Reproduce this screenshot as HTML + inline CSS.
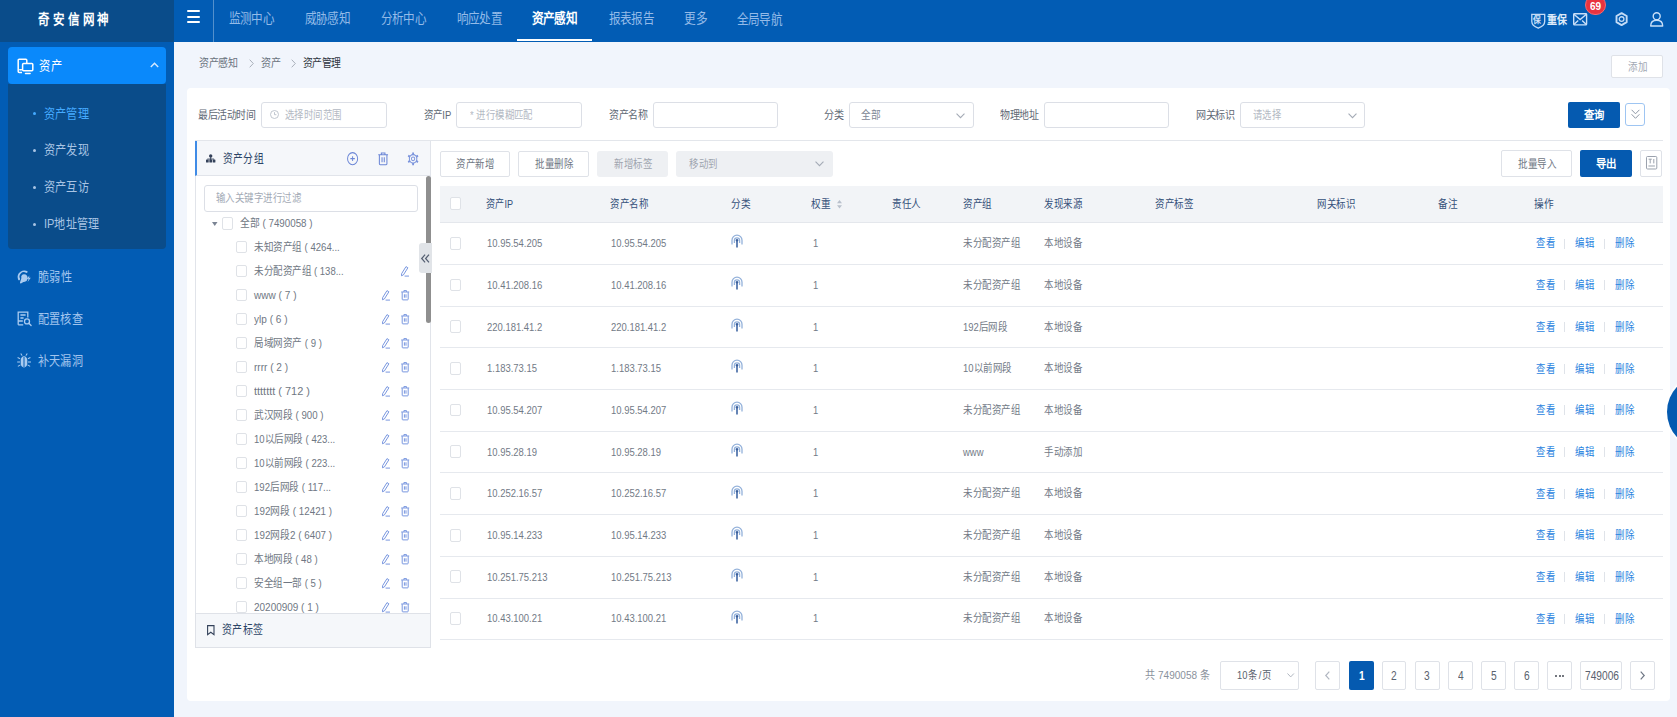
<!DOCTYPE html>
<html lang="zh-CN"><head><meta charset="utf-8"><title>资产管理</title>
<style>
*{box-sizing:border-box;margin:0;padding:0}
html,body{width:1677px;height:717px;overflow:hidden}
body{position:relative;background:#f1f5fc;font-family:"Liberation Sans",sans-serif;font-size:11px;color:#5d6673}
.b{position:absolute}
.t{position:absolute;white-space:nowrap;height:20px;line-height:20px;transform-origin:0 50%;transform:scaleX(.87)}
svg{position:absolute;overflow:visible}
/* text classes */
.nav{font-size:13.5px;color:#94bbe8;transform:scaleX(.83)}
.nav.on{color:#fff;font-weight:bold}
.logo{font-size:14px;font-weight:bold;color:#fff;letter-spacing:4px;transform:scaleX(.82)}
.m1{font-size:13px;color:#a2c5ee;transform:scaleX(.86)}
.m1.on{color:#fff}
.m2{font-size:13px;color:#a9c4e4;transform:scaleX(.86)}
.m2.on{color:#45aaff}
.bc{font-size:11.5px;color:#6b7480;transform:scaleX(.85)}
.bc.on{color:#2f3640}
.lb{font-size:11.5px;color:#616975;transform:scaleX(.85)}
.ph{font-size:11px;color:#b3b9c3;transform:scaleX(.87)}
.val{font-size:11px;color:#7d8694}
.btn{font-size:11px;color:#6e7683}
.btnw{font-size:11.5px;color:#fff;font-weight:bold;transform:scaleX(.85)}
.dis{font-size:11px;color:#9ea5af}
.ph2{font-size:11px;color:#a3aab5}
.pt{font-size:12.5px;color:#2c4466;transform:scaleX(.84)}
.tr{font-size:11px;color:#6f7783;transform:scaleX(.88)}
.th{font-size:11px;color:#34507a;transform:scaleX(.88)}
.td{font-size:11px;color:#727a86;transform:scaleX(.86)}
.lk{font-size:11px;color:#2a84e0;transform:scaleX(.87)}
.pg{font-size:11px;color:#5a626e;transform:scaleX(.85)}
.pgt{font-size:11px;color:#8a919c;transform:scaleX(.86)}
/* boxes */
.inp{border:1px solid #dcdfe6;border-radius:3px;background:#fff}
.wbtn{border:1px solid #dfe2e8;border-radius:2px;background:#fff}
.pbtn{background:#055ab0;border-radius:2px}
.gbtn{background:#eef0f3;border-radius:3px}
.cb{border:1px solid #dfe2e7;border-radius:2px;background:#fff}
.hl{background:#e6e9ee;height:1px}
.pb{border:1px solid #dfe2e8;border-radius:2px;background:#fff}
</style></head><body>

<div class="b" id="side" style="left:0;top:0;width:174px;height:717px;background:#025cb4"></div>
<div class="b" id="logo" style="left:0;top:0;width:174px;height:41.5px;background:#0a4c8a"></div>
<span class="t logo" style="left:38.2px;top:9.2px;transform:scaleX(0.821);width:90.30px;text-align-last:justify;">奇安信网神</span>
<div class="b " style="left:8px;top:47px;width:158.0px;height:37.0px;background:#0a89fb;border-radius:4px"></div>
<div class="b " style="left:8px;top:84px;width:158.0px;height:164.5px;background:#0a4c8a;border-radius:0 0 4px 4px"></div>
<svg style="left:16.5px;top:58px" width="17" height="17" viewBox="0 0 17 17" fill="none" stroke="#fff" stroke-width="1.5" stroke-linejoin="round"><path d="M5 14.5H2.2a1 1 0 0 1-1-1V2.2a1 1 0 0 1 1-1h6.6a1 1 0 0 1 1 1V5"/><rect x="5.6" y="5.6" width="10.2" height="7.2" rx="1" fill="#0a89fb"/><path d="M8.5 15.6h4.6M2.8 11.8h1.6" stroke-linecap="round"/></svg>
<span class="t m1 on" style="left:38.5px;top:56.0px;transform:scaleX(0.865);width:26.30px;text-align-last:justify;">资产</span>
<svg style="left:150px;top:62px" width="9" height="6" viewBox="0 0 9 6" fill="none" stroke="#d6e9ff" stroke-width="1.4"><path d="M0.8 5L4.5 1.3 8.2 5"/></svg>
<div class="b " style="left:32.8px;top:112.1px;width:3.0px;height:3.0px;background:#45aaff;border-radius:50%"></div>
<span class="t m2 on" style="left:43.8px;top:103.5px;transform:scaleX(0.858);width:52.30px;text-align-last:justify;">资产管理</span>
<div class="b " style="left:32.8px;top:148.9px;width:3.0px;height:3.0px;background:#a9c4e4;border-radius:50%"></div>
<span class="t m2" style="left:43.8px;top:140.3px;transform:scaleX(0.858);width:52.30px;text-align-last:justify;">资产发现</span>
<div class="b " style="left:32.8px;top:185.6px;width:3.0px;height:3.0px;background:#a9c4e4;border-radius:50%"></div>
<span class="t m2" style="left:43.8px;top:177.0px;transform:scaleX(0.858);width:52.30px;text-align-last:justify;">资产互访</span>
<div class="b " style="left:32.8px;top:222.6px;width:3.0px;height:3.0px;background:#a9c4e4;border-radius:50%"></div>
<span class="t m2" style="left:43.8px;top:214.0px;transform:scaleX(0.848);width:64.60px;text-align-last:justify;">IP地址管理</span>
<svg style="left:17px;top:269.600px" width="14" height="14" viewBox="0 0 14 14" fill="#aacbf0"><path d="M7 .6a6.4 6.4 0 0 0-5.8 9.1c.3.6 1 .7 1.500.3.500-.4.500-1 .3-1.500A4.300 4.300 0 0 1 9 2.800c.6.2 1.200 0 1.500-.500.300-.6 0-1.200-.5-1.400A6.300 6.300 0 0 0 7 .6zM7 4.200a2.800 2.800 0 0 0-2.600 3.900L3 12.600c-.2.600.4 1.100.9.800l2.500-1.500a2.800 2.800 0 1 0 .6-7.700zm5.300 1.200-2.200 3.300h1.500l-1 3.300 3.200-4.200h-1.700z"/></svg>
<span class="t m1" style="left:37.5px;top:266.6px;transform:scaleX(0.859);width:39.30px;text-align-last:justify;">脆弱性</span>
<svg style="left:17px;top:311px" width="15" height="15" viewBox="0 0 15 15" fill="none" stroke="#aacbf0" stroke-width="1.3"><path d="M1.200 13.800V1.200h9.600v5.300M3.400 4h5.200M3.400 7h3.200M1.200 10h4.600M1.200 13.800h5"/><circle cx="10" cy="10.400" r="2.500"/><path d="M11.900 12.300l2.200 2.200" stroke-linecap="round"/></svg>
<span class="t m1" style="left:37.5px;top:308.7px;transform:scaleX(0.856);width:52.30px;text-align-last:justify;">配置核查</span>
<svg style="left:17px;top:353px" width="14" height="15" viewBox="0 0 14 15" fill="#aacbf0"><path d="M7 3.200c-1.900 0-3.300 1.700-3.300 4v3.300c0 2.200 1.400 3.900 3.300 3.900s3.300-1.700 3.300-3.900V7.200c0-2.300-1.400-4-3.300-4zM4.600 2.800 3.300.8 4.200.3l1.400 2.100zM9.400 2.800 10.700.8 9.800.3 8.400 2.400zM3 6.200.4 5l.4-.9L3.300 5.300zM11 6.200 13.600 5l-.4-.9-2.500 1.200zM3 8.600H.2v1h2.800zM14 8.600h-3v1h3zM3.200 11.400.6 13l.5.800 2.500-1.500zM10.800 11.400l2.600 1.600-.5.800-2.500-1.500z"/><path d="M6.500 4h1v10h-1z" fill="#025cb4"/></svg>
<span class="t m1" style="left:37.5px;top:350.5px;transform:scaleX(0.856);width:52.30px;text-align-last:justify;">补天漏洞</span>
<div class="b" id="top" style="left:174px;top:0;width:1503px;height:41.5px;background:#025cb4"></div>
<div class="b " style="left:187px;top:10.4px;width:12.5px;height:2.0px;background:#fff;border-radius:1px"></div>
<div class="b " style="left:187px;top:15.9px;width:12.5px;height:2.0px;background:#fff;border-radius:1px"></div>
<div class="b " style="left:187px;top:21.4px;width:12.5px;height:2.0px;background:#fff;border-radius:1px"></div>
<div class="b " style="left:212.5px;top:0px;width:1.0px;height:41.5px;background:rgba(255,255,255,.32)"></div>
<span class="t nav" style="left:229.2px;top:8.6px;transform:scaleX(0.858);width:52.30px;text-align-last:justify;">监测中心</span>
<span class="t nav" style="left:305px;top:8.6px;transform:scaleX(0.858);width:52.30px;text-align-last:justify;">威胁感知</span>
<span class="t nav" style="left:381px;top:8.6px;transform:scaleX(0.858);width:52.30px;text-align-last:justify;">分析中心</span>
<span class="t nav" style="left:456.7px;top:8.6px;transform:scaleX(0.858);width:52.30px;text-align-last:justify;">响应处置</span>
<span class="t nav on" style="left:532.3px;top:8.6px;transform:scaleX(0.858);width:52.30px;text-align-last:justify;">资产感知</span>
<span class="t nav" style="left:608.5px;top:8.6px;transform:scaleX(0.858);width:52.30px;text-align-last:justify;">报表报告</span>
<span class="t nav" style="left:683.7px;top:8.6px;transform:scaleX(0.865);width:26.30px;text-align-last:justify;">更多</span>
<span class="t nav" style="left:737.3px;top:9.5px;transform:scaleX(0.858);width:52.30px;text-align-last:justify;">全局导航</span>
<div class="b " style="left:516.6px;top:39.3px;width:75.4px;height:2.2px;background:#fff"></div>
<svg style="left:1530.500px;top:13px" width="14.500" height="16" viewBox="0 0 14.500 16" fill="none" stroke="#c3dbf6" stroke-width="1.300"><path d="M.8 1.300h12.900v7.200c0 3.200-2.800 5.300-6.450 6.700C3.600 13.800.8 11.700.8 8.500z"/></svg>
<span class="t " style="left:1533.3px;top:10.3px;font-size:9px;font-weight:bold;color:#cfe2f8;transform:scaleX(.92)width:9.30px;text-align-last:justify;">保</span>
<span class="t " style="left:1547.2px;top:10.4px;font-size:11.5px;color:#deebfa;font-weight:bold;transform:scaleX(0.868);width:22.30px;text-align-last:justify;">重保</span>
<svg style="left:1572.700px;top:13.400px" width="14.300" height="12.600" viewBox="0 0 14.300 12.600" fill="none" stroke="#c9dff8" stroke-width="1.400"><rect x=".7" y=".7" width="12.900" height="11.200" rx=".8"/><path d="M.9 1.200l6.250 5.300 6.250-5.300M.9 11.600l4.300-4.200M13.400 11.600 9.100 7.400"/></svg>
<div class="b " style="left:1585.3px;top:-5px;width:20.9px;height:19.7px;background:#e9333f;border-radius:10px;border:1px solid #f46a72"></div>
<span class="t " style="left:1589.9px;top:-4.3px;font-size:10.5px;font-weight:bold;color:#fff;transform:scaleX(0.958);">69</span>
<svg style="left:1615px;top:11.600px" width="13.200" height="14.200" viewBox="0 0 14 15.200" preserveAspectRatio="none" fill="none" stroke="#c3dbf6" stroke-width="1.500"><path d="M7 1.200l5.400 3.100v6.600L7 14 1.600 10.900V4.300z" stroke-linejoin="round" stroke-width="2"/><circle cx="7" cy="7.600" r="2.500" stroke-width="1.400"/></svg>
<svg style="left:1650.300px;top:11.700px" width="13.400" height="14.700" viewBox="0 0 13.400 14.700" fill="none" stroke="#c9dff8" stroke-width="1.400"><circle cx="6.700" cy="4.300" r="3.500"/><path d="M.7 14c0-3.600 2.400-5.800 6-5.800s6 2.200 6 5.800z" stroke-linejoin="round"/></svg>
<span class="t bc" style="left:199.1px;top:53.3px;transform:scaleX(0.868);width:44.30px;text-align-last:justify;">资产感知</span>
<svg style="left:248.500px;top:59px" width="5" height="9" viewBox="0 0 5 9" fill="none" stroke="#a9b0ba" stroke-width="1"><path d="M.7.700 4.300 4.500.7 8.300"/></svg>
<span class="t bc" style="left:260.5px;top:53.3px;transform:scaleX(0.877);width:22.30px;text-align-last:justify;">资产</span>
<svg style="left:290.500px;top:59px" width="5" height="9" viewBox="0 0 5 9" fill="none" stroke="#a9b0ba" stroke-width="1"><path d="M.7.700 4.300 4.500.7 8.300"/></svg>
<span class="t bc on" style="left:302.9px;top:53.3px;transform:scaleX(0.855);width:44.30px;text-align-last:justify;">资产管理</span>
<div class="b wbtn" style="left:1611.2px;top:55.2px;width:51.6px;height:22.6px;"></div>
<span class="t " style="left:1627.6px;top:56.9px;font-size:11px;color:#a1a8b3;transform:scaleX(0.868);width:22.30px;text-align-last:justify;">添加</span>
<div class="b " style="left:187px;top:88px;width:1482.5px;height:613.0px;background:#fff;border-radius:4px"></div>
<span class="t lb" style="left:198.4px;top:104.8px;transform:scaleX(0.862);width:66.30px;text-align-last:justify;">最后活动时间</span>
<div class="b inp" style="left:261px;top:102.2px;width:125.7px;height:25.6px;"></div>
<svg style="left:270.400px;top:110.300px" width="9" height="9" viewBox="0 0 9 9" fill="none" stroke="#b9bfc9" stroke-width=".9"><circle cx="4.500" cy="4.500" r="4"/><path d="M4.500 2.200v2.500h1.900"/></svg>
<span class="t ph" style="left:285.4px;top:104.8px;transform:scaleX(0.858);width:66.30px;text-align-last:justify;">选择时间范围</span>
<span class="t lb" style="left:423.5px;top:104.8px;transform:scaleX(0.824);width:33.17px;text-align-last:justify;">资产IP</span>
<div class="b inp" style="left:456.4px;top:102.2px;width:125.9px;height:25.6px;"></div>
<span class="t ph" style="left:469.8px;top:104.8px;transform:scaleX(0.854);width:73.64px;text-align-last:justify;">* 进行模糊匹配</span>
<span class="t lb" style="left:609px;top:104.8px;transform:scaleX(0.864);width:44.30px;text-align-last:justify;">资产名称</span>
<div class="b inp" style="left:652.6px;top:102.2px;width:125.6px;height:25.6px;"></div>
<span class="t lb" style="left:823.8px;top:104.8px;transform:scaleX(0.877);width:22.30px;text-align-last:justify;">分类</span>
<div class="b inp" style="left:848.5px;top:102.2px;width:125.1px;height:25.6px;"></div>
<span class="t val" style="left:860.7px;top:104.8px;transform:scaleX(0.877);width:22.30px;text-align-last:justify;">全部</span>
<svg style="left:956.400px;top:112.500px" width="9" height="5.600" viewBox="0 0 8.400 5" fill="none" stroke="#a4aab5" stroke-width="1"><path d="M.5.500 4.200 4.200 7.900.5"/></svg>
<span class="t lb" style="left:1000.2px;top:104.8px;transform:scaleX(0.866);width:44.30px;text-align-last:justify;">物理地址</span>
<div class="b inp" style="left:1043.7px;top:102.2px;width:125.8px;height:25.6px;"></div>
<span class="t lb" style="left:1196px;top:104.8px;transform:scaleX(0.875);width:44.30px;text-align-last:justify;">网关标识</span>
<div class="b inp" style="left:1240px;top:102.2px;width:125.3px;height:25.6px;"></div>
<span class="t ph" style="left:1252.6px;top:104.8px;transform:scaleX(0.848);width:33.30px;text-align-last:justify;">请选择</span>
<svg style="left:1347.700px;top:112.500px" width="9" height="5.600" viewBox="0 0 8.400 5" fill="none" stroke="#a4aab5" stroke-width="1"><path d="M.5.500 4.200 4.200 7.900.5"/></svg>
<div class="b pbtn" style="left:1567.5px;top:102.3px;width:52.8px;height:25.6px;"></div>
<span class="t btnw" style="left:1584.3px;top:105.0px;transform:scaleX(0.895);width:22.30px;text-align-last:justify;">查询</span>
<div class="b " style="left:1625.2px;top:102.8px;width:19.6px;height:23.0px;border:1px solid #9ec5f2;border-radius:3px;background:#fff"></div>
<svg style="left:1630.500px;top:108.800px" width="9" height="10.500" viewBox="0 0 9 10.500" fill="none" stroke="#8f98a6" stroke-width="1"><path d="M.6.800 4.500 4.800 8.400.8M.6 5.300 4.500 9.300 8.400 5.300"/></svg>
<div class="b hl" style="left:195.4px;top:139.8px;width:1467.2px;height:1.0px;background:#e3e6eb"></div>
<div class="b " style="left:195.4px;top:140.8px;width:236.1px;height:506.7px;border:1px solid #e1e4ea;border-top:0;background:#fff"></div>
<div class="b " style="left:195.4px;top:140.8px;width:236.1px;height:35.0px;background:#f5f7fa;border-bottom:1px solid #e1e4ea;border-right:1px solid #e1e4ea;border-left:2px solid #3f8be6"></div>
<svg style="left:205.800px;top:154.400px" width="9.400" height="9" viewBox="0 0 9.400 9" fill="#34425a"><circle cx="4.700" cy="1.900" r="1.700"/><rect x="4.200" y="3" width="1" height="3"/><rect x="1.300" y="4.600" width="6.800" height=".9"/><rect x="0" y="5.400" width="2.700" height="3.200" rx=".6"/><rect x="3.350" y="5.400" width="2.700" height="3.200" rx=".6"/><rect x="6.700" y="5.400" width="2.700" height="3.200" rx=".6"/></svg>
<span class="t pt" style="left:222.7px;top:149.0px;transform:scaleX(0.779);width:52.30px;text-align-last:justify;">资产分组</span>
<svg style="left:347.100px;top:151.600px" width="11.200" height="13.400" viewBox="0 0 14 14" preserveAspectRatio="none" fill="none" stroke="#6b86d6" stroke-width="1.200"><circle cx="7" cy="7" r="6.300"/><path d="M7 4.500v5M4.200 7h5.600"/></svg>
<svg style="left:377.800px;top:151.600px" width="10.300" height="13.400" viewBox="0 0 12 14" preserveAspectRatio="none" fill="none" stroke="#6b86d6" stroke-width="1.200"><path d="M.3 2.900h11.400M3.900 2.700V1h4.200v1.700M1.600 3.100v9.300c0 .6.400.9.900.9h7c.5 0 .9-.3.900-.9V3.100M4.700 5.600v5M7.300 5.600v5"/></svg>
<svg style="left:406.900px;top:151.600px" width="12.200" height="13.700" viewBox="0 0 14 14" preserveAspectRatio="none" fill="none" stroke="#7b94dc"><circle cx="7" cy="7" r="4.300" stroke-width="1.200"/><circle cx="7" cy="7" r="1.900" stroke-width="1.100"/><path d="M7 .5v2.200M7 11.300v2.200M1.370 3.750l1.900 1.100M10.730 9.150l1.900 1.100M1.370 10.250l1.900-1.100M10.730 4.850l1.900-1.100" stroke-width="2.100"/></svg>
<div class="b inp" style="left:203.5px;top:185.2px;width:214.2px;height:26.4px;"></div>
<span class="t ph2" style="left:216px;top:188.3px;transform:scaleX(0.857);width:99.30px;text-align-last:justify;">输入关键字进行过滤</span>
<div class="b " style="left:425.6px;top:176px;width:5.3px;height:147.0px;background:#8f8f8f;border-radius:2.500px"></div>
<div class="b " style="left:418.8px;top:243.4px;width:12.8px;height:30.1px;background:#e1e4e8;border-radius:3px 0 0 3px"></div>
<svg style="left:420.600px;top:253.500px" width="8.600" height="9" viewBox="0 0 8.600 9" fill="none" stroke="#566073" stroke-width="1.250"><path d="M4.100.600.7 4.500 4.100 8.400M8 .600 4.600 4.500 8 8.400"/></svg>
<svg style="left:211.500px;top:221.500px" width="5.500" height="4" viewBox="0 0 5.500 4" fill="#7b8494"><path d="M0 0h5.500L2.750 4z"/></svg>
<div class="b cb" style="left:222px;top:217px;width:11.1px;height:12.6px;"></div>
<span class="t tr" style="left:239.7px;top:213.4px;transform:scaleX(0.889);width:81.63px;text-align-last:justify;">全部 ( 7490058 )</span>
<div class="b cb" style="left:236.1px;top:240.7px;width:11.2px;height:12.8px;"></div>
<span class="t tr" style="left:253.7px;top:237.2px;transform:scaleX(0.868);width:98.72px;text-align-last:justify;">未知资产组 ( 4264...</span>
<div class="b cb" style="left:236.1px;top:264.7px;width:11.2px;height:12.8px;"></div>
<span class="t tr" style="left:253.7px;top:261.2px;transform:scaleX(0.865);width:103.60px;text-align-last:justify;">未分配资产组 ( 138...</span>
<svg style="left:401.4px;top:266.0px" width="8.200" height="10.600" viewBox="0 0 8.200 10.600" fill="none" stroke="#7191dd" stroke-width=".95"><path d="M5 .600 6.900 1.800 2.400 8.900.5 9.800l.1-2.100zM3.600 10.100H8"/></svg>
<div class="b cb" style="left:236.1px;top:288.7px;width:11.2px;height:12.8px;"></div>
<span class="t tr" style="left:253.7px;top:285.2px;transform:scaleX(0.915);">www ( 7 )</span>
<svg style="left:382.2px;top:289.8px" width="8.200" height="10.600" viewBox="0 0 8.200 10.600" fill="none" stroke="#7191dd" stroke-width=".95"><path d="M5 .600 6.900 1.800 2.400 8.900.5 9.800l.1-2.100zM3.600 10.100H8"/></svg>
<svg style="left:401.4px;top:289.6px" width="8.400" height="10.400" viewBox="0 0 8.400 10.400" fill="none" stroke="#7191dd" stroke-width=".95"><path d="M.2 2h8M2.900 1.800V.6h2.600v1.200M1.200 2.200v7c0 .4.300.7.700.7h4.600c.4 0 .7-.3.700-.7v-7M3.400 4.300v3.400M5 4.300v3.400"/></svg>
<div class="b cb" style="left:236.1px;top:312.7px;width:11.2px;height:12.8px;"></div>
<span class="t tr" style="left:253.7px;top:309.2px;transform:scaleX(0.913);">ylp ( 6 )</span>
<svg style="left:382.2px;top:313.8px" width="8.200" height="10.600" viewBox="0 0 8.200 10.600" fill="none" stroke="#7191dd" stroke-width=".95"><path d="M5 .600 6.900 1.800 2.400 8.900.5 9.800l.1-2.100zM3.600 10.100H8"/></svg>
<svg style="left:401.4px;top:313.6px" width="8.400" height="10.400" viewBox="0 0 8.400 10.400" fill="none" stroke="#7191dd" stroke-width=".95"><path d="M.2 2h8M2.900 1.800V.6h2.600v1.200M1.200 2.200v7c0 .4.300.7.700.7h4.600c.4 0 .7-.3.700-.7v-7M3.400 4.300v3.400M5 4.300v3.400"/></svg>
<div class="b cb" style="left:236.1px;top:336.7px;width:11.2px;height:12.8px;"></div>
<span class="t tr" style="left:253.7px;top:333.2px;transform:scaleX(0.871);width:77.92px;text-align-last:justify;">局域网资产 ( 9 )</span>
<svg style="left:382.2px;top:337.8px" width="8.200" height="10.600" viewBox="0 0 8.200 10.600" fill="none" stroke="#7191dd" stroke-width=".95"><path d="M5 .600 6.900 1.800 2.400 8.900.5 9.800l.1-2.100zM3.600 10.100H8"/></svg>
<svg style="left:401.4px;top:337.6px" width="8.400" height="10.400" viewBox="0 0 8.400 10.400" fill="none" stroke="#7191dd" stroke-width=".95"><path d="M.2 2h8M2.900 1.800V.6h2.600v1.200M1.200 2.200v7c0 .4.300.7.700.7h4.600c.4 0 .7-.3.700-.7v-7M3.400 4.300v3.400M5 4.300v3.400"/></svg>
<div class="b cb" style="left:236.1px;top:360.7px;width:11.2px;height:12.8px;"></div>
<span class="t tr" style="left:253.7px;top:357.2px;transform:scaleX(0.915);">rrrr ( 2 )</span>
<svg style="left:382.2px;top:361.8px" width="8.200" height="10.600" viewBox="0 0 8.200 10.600" fill="none" stroke="#7191dd" stroke-width=".95"><path d="M5 .600 6.900 1.800 2.400 8.900.5 9.800l.1-2.100zM3.600 10.100H8"/></svg>
<svg style="left:401.4px;top:361.6px" width="8.400" height="10.400" viewBox="0 0 8.400 10.400" fill="none" stroke="#7191dd" stroke-width=".95"><path d="M.2 2h8M2.900 1.800V.6h2.600v1.200M1.200 2.200v7c0 .4.300.7.700.7h4.600c.4 0 .7-.3.700-.7v-7M3.400 4.300v3.400M5 4.300v3.400"/></svg>
<div class="b cb" style="left:236.1px;top:384.7px;width:11.2px;height:12.8px;"></div>
<span class="t tr" style="left:253.7px;top:381.2px;transform:scaleX(0.994);">ttttttt ( 712 )</span>
<svg style="left:382.2px;top:385.8px" width="8.200" height="10.600" viewBox="0 0 8.200 10.600" fill="none" stroke="#7191dd" stroke-width=".95"><path d="M5 .600 6.900 1.800 2.400 8.900.5 9.800l.1-2.100zM3.600 10.100H8"/></svg>
<svg style="left:401.4px;top:385.6px" width="8.400" height="10.400" viewBox="0 0 8.400 10.400" fill="none" stroke="#7191dd" stroke-width=".95"><path d="M.2 2h8M2.900 1.800V.6h2.600v1.200M1.200 2.200v7c0 .4.300.7.700.7h4.600c.4 0 .7-.3.700-.7v-7M3.400 4.300v3.400M5 4.300v3.400"/></svg>
<div class="b cb" style="left:236.1px;top:408.7px;width:11.2px;height:12.8px;"></div>
<span class="t tr" style="left:253.7px;top:405.2px;transform:scaleX(0.879);width:79.16px;text-align-last:justify;">武汉网段 ( 900 )</span>
<svg style="left:382.2px;top:409.8px" width="8.200" height="10.600" viewBox="0 0 8.200 10.600" fill="none" stroke="#7191dd" stroke-width=".95"><path d="M5 .600 6.900 1.800 2.400 8.900.5 9.800l.1-2.100zM3.600 10.100H8"/></svg>
<svg style="left:401.4px;top:409.6px" width="8.400" height="10.400" viewBox="0 0 8.400 10.400" fill="none" stroke="#7191dd" stroke-width=".95"><path d="M.2 2h8M2.900 1.800V.6h2.600v1.200M1.200 2.200v7c0 .4.300.7.700.7h4.600c.4 0 .7-.3.700-.7v-7M3.400 4.300v3.400M5 4.300v3.400"/></svg>
<div class="b cb" style="left:236.1px;top:432.7px;width:11.2px;height:12.8px;"></div>
<span class="t tr" style="left:253.7px;top:429.2px;transform:scaleX(0.866);width:93.85px;text-align-last:justify;">10以后网段 ( 423...</span>
<svg style="left:382.2px;top:433.8px" width="8.200" height="10.600" viewBox="0 0 8.200 10.600" fill="none" stroke="#7191dd" stroke-width=".95"><path d="M5 .600 6.900 1.800 2.400 8.900.5 9.800l.1-2.100zM3.600 10.100H8"/></svg>
<svg style="left:401.4px;top:433.6px" width="8.400" height="10.400" viewBox="0 0 8.400 10.400" fill="none" stroke="#7191dd" stroke-width=".95"><path d="M.2 2h8M2.900 1.800V.6h2.600v1.200M1.200 2.200v7c0 .4.300.7.700.7h4.600c.4 0 .7-.3.700-.7v-7M3.400 4.300v3.400M5 4.300v3.400"/></svg>
<div class="b cb" style="left:236.1px;top:456.7px;width:11.2px;height:12.8px;"></div>
<span class="t tr" style="left:253.7px;top:453.2px;transform:scaleX(0.866);width:93.85px;text-align-last:justify;">10以前网段 ( 223...</span>
<svg style="left:382.2px;top:457.8px" width="8.200" height="10.600" viewBox="0 0 8.200 10.600" fill="none" stroke="#7191dd" stroke-width=".95"><path d="M5 .600 6.900 1.800 2.400 8.900.5 9.800l.1-2.100zM3.600 10.100H8"/></svg>
<svg style="left:401.4px;top:457.6px" width="8.400" height="10.400" viewBox="0 0 8.400 10.400" fill="none" stroke="#7191dd" stroke-width=".95"><path d="M.2 2h8M2.900 1.800V.6h2.600v1.200M1.200 2.200v7c0 .4.300.7.700.7h4.600c.4 0 .7-.3.700-.7v-7M3.400 4.300v3.400M5 4.300v3.400"/></svg>
<div class="b cb" style="left:236.1px;top:480.7px;width:11.2px;height:12.8px;"></div>
<span class="t tr" style="left:253.7px;top:477.2px;transform:scaleX(0.874);width:88.14px;text-align-last:justify;">192后网段 ( 117...</span>
<svg style="left:382.2px;top:481.8px" width="8.200" height="10.600" viewBox="0 0 8.200 10.600" fill="none" stroke="#7191dd" stroke-width=".95"><path d="M5 .600 6.900 1.800 2.400 8.900.5 9.800l.1-2.100zM3.600 10.100H8"/></svg>
<svg style="left:401.4px;top:481.6px" width="8.400" height="10.400" viewBox="0 0 8.400 10.400" fill="none" stroke="#7191dd" stroke-width=".95"><path d="M.2 2h8M2.900 1.800V.6h2.600v1.200M1.200 2.200v7c0 .4.300.7.700.7h4.600c.4 0 .7-.3.700-.7v-7M3.400 4.300v3.400M5 4.300v3.400"/></svg>
<div class="b cb" style="left:236.1px;top:504.7px;width:11.2px;height:12.8px;"></div>
<span class="t tr" style="left:253.7px;top:501.2px;transform:scaleX(0.89);width:87.74px;text-align-last:justify;">192网段 ( 12421 )</span>
<svg style="left:382.2px;top:505.8px" width="8.200" height="10.600" viewBox="0 0 8.200 10.600" fill="none" stroke="#7191dd" stroke-width=".95"><path d="M5 .600 6.900 1.800 2.400 8.900.5 9.800l.1-2.100zM3.600 10.100H8"/></svg>
<svg style="left:401.4px;top:505.6px" width="8.400" height="10.400" viewBox="0 0 8.400 10.400" fill="none" stroke="#7191dd" stroke-width=".95"><path d="M.2 2h8M2.900 1.800V.6h2.600v1.200M1.200 2.200v7c0 .4.300.7.700.7h4.600c.4 0 .7-.3.700-.7v-7M3.400 4.300v3.400M5 4.300v3.400"/></svg>
<div class="b cb" style="left:236.1px;top:528.7px;width:11.2px;height:12.8px;"></div>
<span class="t tr" style="left:253.7px;top:525.2px;transform:scaleX(0.89);width:87.74px;text-align-last:justify;">192网段2 ( 6407 )</span>
<svg style="left:382.2px;top:529.8px" width="8.200" height="10.600" viewBox="0 0 8.200 10.600" fill="none" stroke="#7191dd" stroke-width=".95"><path d="M5 .600 6.900 1.800 2.400 8.900.5 9.800l.1-2.100zM3.600 10.100H8"/></svg>
<svg style="left:401.4px;top:529.6px" width="8.400" height="10.400" viewBox="0 0 8.400 10.400" fill="none" stroke="#7191dd" stroke-width=".95"><path d="M.2 2h8M2.900 1.800V.6h2.600v1.200M1.200 2.200v7c0 .4.300.7.700.7h4.600c.4 0 .7-.3.700-.7v-7M3.400 4.300v3.400M5 4.300v3.400"/></svg>
<div class="b cb" style="left:236.1px;top:552.7px;width:11.2px;height:12.8px;"></div>
<span class="t tr" style="left:253.7px;top:549.2px;transform:scaleX(0.872);width:73.03px;text-align-last:justify;">本地网段 ( 48 )</span>
<svg style="left:382.2px;top:553.8px" width="8.200" height="10.600" viewBox="0 0 8.200 10.600" fill="none" stroke="#7191dd" stroke-width=".95"><path d="M5 .600 6.900 1.800 2.400 8.900.5 9.800l.1-2.100zM3.600 10.100H8"/></svg>
<svg style="left:401.4px;top:553.6px" width="8.400" height="10.400" viewBox="0 0 8.400 10.400" fill="none" stroke="#7191dd" stroke-width=".95"><path d="M.2 2h8M2.900 1.800V.6h2.600v1.200M1.200 2.200v7c0 .4.300.7.700.7h4.600c.4 0 .7-.3.700-.7v-7M3.400 4.300v3.400M5 4.300v3.400"/></svg>
<div class="b cb" style="left:236.1px;top:576.7px;width:11.2px;height:12.8px;"></div>
<span class="t tr" style="left:253.7px;top:573.2px;transform:scaleX(0.87);width:77.92px;text-align-last:justify;">安全组一部 ( 5 )</span>
<svg style="left:382.2px;top:577.8px" width="8.200" height="10.600" viewBox="0 0 8.200 10.600" fill="none" stroke="#7191dd" stroke-width=".95"><path d="M5 .600 6.900 1.800 2.400 8.900.5 9.800l.1-2.100zM3.600 10.100H8"/></svg>
<svg style="left:401.4px;top:577.6px" width="8.400" height="10.400" viewBox="0 0 8.400 10.400" fill="none" stroke="#7191dd" stroke-width=".95"><path d="M.2 2h8M2.900 1.800V.6h2.600v1.200M1.200 2.200v7c0 .4.300.7.700.7h4.600c.4 0 .7-.3.700-.7v-7M3.400 4.300v3.400M5 4.300v3.400"/></svg>
<div class="b cb" style="left:236.1px;top:600.7px;width:11.2px;height:12.8px;"></div>
<span class="t tr" style="left:253.7px;top:597.2px;transform:scaleX(0.906);">20200909 ( 1 )</span>
<svg style="left:382.2px;top:601.8px" width="8.200" height="10.600" viewBox="0 0 8.200 10.600" fill="none" stroke="#7191dd" stroke-width=".95"><path d="M5 .600 6.900 1.800 2.400 8.900.5 9.800l.1-2.100zM3.600 10.100H8"/></svg>
<svg style="left:401.4px;top:601.6px" width="8.400" height="10.400" viewBox="0 0 8.400 10.400" fill="none" stroke="#7191dd" stroke-width=".95"><path d="M.2 2h8M2.900 1.800V.6h2.600v1.200M1.200 2.200v7c0 .4.300.7.700.7h4.600c.4 0 .7-.3.700-.7v-7M3.400 4.300v3.400M5 4.300v3.400"/></svg>
<div class="b " style="left:195.4px;top:613px;width:236.1px;height:34.5px;background:#f5f7fa;border:1px solid #dfe2e8"></div>
<svg style="left:206.700px;top:625px" width="7.600" height="10.400" viewBox="0 0 7.600 10.400" fill="none" stroke="#34425a" stroke-width="1.100"><path d="M.6.600h6.400v9L3.800 7.300.6 9.600z"/></svg>
<span class="t pt" style="left:222.2px;top:620.4px;transform:scaleX(0.794);width:52.30px;text-align-last:justify;">资产标签</span>
<div class="b wbtn" style="left:439.5px;top:150.5px;width:70.8px;height:26.1px;"></div>
<span class="t btn" style="left:455.9px;top:153.7px;transform:scaleX(0.857);width:44.30px;text-align-last:justify;">资产新增</span>
<div class="b wbtn" style="left:518.2px;top:150.5px;width:70.8px;height:26.1px;"></div>
<span class="t btn" style="left:534.6px;top:153.7px;transform:scaleX(0.857);width:44.30px;text-align-last:justify;">批量删除</span>
<div class="b gbtn" style="left:597.3px;top:150.5px;width:70.7px;height:26.1px;"></div>
<span class="t dis" style="left:613.7px;top:153.7px;transform:scaleX(0.857);width:44.30px;text-align-last:justify;">新增标签</span>
<div class="b gbtn" style="left:676.3px;top:150.5px;width:156.7px;height:26.1px;"></div>
<span class="t dis" style="left:689px;top:153.7px;transform:scaleX(0.858);width:33.30px;text-align-last:justify;">移动到</span>
<svg style="left:815px;top:161px" width="9" height="5.600" viewBox="0 0 8.400 5" fill="none" stroke="#a4aab5" stroke-width="1"><path d="M.5.500 4.200 4.200 7.900.5"/></svg>
<div class="b wbtn" style="left:1501px;top:150.4px;width:71.2px;height:26.2px;"></div>
<span class="t btn" style="left:1517.8px;top:153.7px;transform:scaleX(0.868);width:44.30px;text-align-last:justify;">批量导入</span>
<div class="b pbtn" style="left:1580px;top:150.4px;width:52.4px;height:26.2px;"></div>
<span class="t btnw" style="left:1596.2px;top:153.8px;transform:scaleX(0.905);width:22.30px;text-align-last:justify;">导出</span>
<div class="b wbtn" style="left:1640.2px;top:150.4px;width:22.0px;height:26.2px;"></div>
<svg style="left:1646px;top:156.200px" width="11.300" height="13.500" viewBox="0 0 11.300 13.500" fill="none" stroke="#9aa1ad" stroke-width="1"><rect x=".5" y=".5" width="10.300" height="12.500" rx="1"/><path d="M2.600 3.200h3.200M4.200 3.200v4.200M7.800 3v4.400M2.400 10h6.500"/></svg>
<div class="b " style="left:439.5px;top:186.4px;width:1223.1px;height:36.2px;background:#f2f4f7;border-bottom:1px solid #e4e7ec"></div>
<div class="b cb" style="left:450px;top:197.1px;width:11.4px;height:12.9px;"></div>
<span class="t th" style="left:486.3px;top:194.3px;transform:scaleX(0.827);width:32.71px;text-align-last:justify;">资产IP</span>
<span class="t th" style="left:610.4px;top:194.3px;transform:scaleX(0.859);width:44.30px;text-align-last:justify;">资产名称</span>
<span class="t th" style="left:730.8px;top:194.3px;transform:scaleX(0.877);width:22.30px;text-align-last:justify;">分类</span>
<span class="t th" style="left:811.3px;top:194.3px;transform:scaleX(0.877);width:22.30px;text-align-last:justify;">权重</span>
<span class="t th" style="left:891.5px;top:194.3px;transform:scaleX(0.867);width:33.30px;text-align-last:justify;">责任人</span>
<span class="t th" style="left:963.4px;top:194.3px;transform:scaleX(0.867);width:33.30px;text-align-last:justify;">资产组</span>
<span class="t th" style="left:1044px;top:194.3px;transform:scaleX(0.859);width:44.30px;text-align-last:justify;">发现来源</span>
<span class="t th" style="left:1155.3px;top:194.3px;transform:scaleX(0.859);width:44.30px;text-align-last:justify;">资产标签</span>
<span class="t th" style="left:1317px;top:194.3px;transform:scaleX(0.859);width:44.30px;text-align-last:justify;">网关标识</span>
<span class="t th" style="left:1437.8px;top:194.3px;transform:scaleX(0.877);width:22.30px;text-align-last:justify;">备注</span>
<span class="t th" style="left:1534.2px;top:194.3px;transform:scaleX(0.877);width:22.30px;text-align-last:justify;">操作</span>
<svg style="left:836.500px;top:200.300px" width="5" height="8.400" viewBox="0 0 5 8.400" fill="#b9c0cc"><path d="M2.500 0 5 3.200H0zM2.500 8.400 0 5.200h5z"/></svg>
<div class="b hl" style="left:439.5px;top:263.8px;width:1223.1px;height:1.0px;"></div>
<div class="b cb" style="left:450px;top:236.8px;width:11.4px;height:12.9px;"></div>
<span class="t td" style="left:486.5px;top:233.1px;">10.95.54.205</span>
<span class="t td" style="left:610.5px;top:233.1px;">10.95.54.205</span>
<svg style="left:731.2px;top:234.3px" width="12" height="13.500" viewBox="0 0 12 13.500" fill="none" stroke="#93b1da" stroke-width="1.300"><path d="M1 10.400V6.200a5 5 0 0 1 10 0v4.200M3.400 9V6.400a2.600 2.600 0 0 1 5.200 0V9"/><path d="M6 6v7.400" stroke="#3f66a3" stroke-width="1.600"/><circle cx="6" cy="6.200" r="1.200" fill="#3a5f9c" stroke="none"/></svg>
<span class="t td" style="left:812.8px;top:233.1px;">1</span>
<span class="t td" style="left:963.4px;top:233.1px;width:66.30px;text-align-last:justify;">未分配资产组</span>
<span class="t td" style="left:1044.2px;top:233.1px;transform:scaleX(0.859);width:44.30px;text-align-last:justify;">本地设备</span>
<span class="t lk" style="left:1535.6px;top:233.4px;transform:scaleX(0.845);width:22.30px;text-align-last:justify;">查看</span>
<div class="b " style="left:1564px;top:238.6px;width:1.0px;height:10.0px;background:#dfe3e9"></div>
<span class="t lk" style="left:1575.2px;top:233.4px;transform:scaleX(0.855);width:22.30px;text-align-last:justify;">编辑</span>
<div class="b " style="left:1603.5px;top:238.6px;width:1.0px;height:10.0px;background:#dfe3e9"></div>
<span class="t lk" style="left:1614.7px;top:233.4px;transform:scaleX(0.859);width:22.30px;text-align-last:justify;">删除</span>
<div class="b hl" style="left:439.5px;top:305.5px;width:1223.1px;height:1.0px;"></div>
<div class="b cb" style="left:450px;top:278.5px;width:11.4px;height:12.9px;"></div>
<span class="t td" style="left:486.5px;top:274.8px;">10.41.208.16</span>
<span class="t td" style="left:610.5px;top:274.8px;">10.41.208.16</span>
<svg style="left:731.2px;top:276.0px" width="12" height="13.500" viewBox="0 0 12 13.500" fill="none" stroke="#93b1da" stroke-width="1.300"><path d="M1 10.400V6.200a5 5 0 0 1 10 0v4.200M3.400 9V6.400a2.600 2.600 0 0 1 5.200 0V9"/><path d="M6 6v7.400" stroke="#3f66a3" stroke-width="1.600"/><circle cx="6" cy="6.200" r="1.200" fill="#3a5f9c" stroke="none"/></svg>
<span class="t td" style="left:812.8px;top:274.8px;">1</span>
<span class="t td" style="left:963.4px;top:274.8px;width:66.30px;text-align-last:justify;">未分配资产组</span>
<span class="t td" style="left:1044.2px;top:274.8px;transform:scaleX(0.859);width:44.30px;text-align-last:justify;">本地设备</span>
<span class="t lk" style="left:1535.6px;top:275.1px;transform:scaleX(0.845);width:22.30px;text-align-last:justify;">查看</span>
<div class="b " style="left:1564px;top:280.3px;width:1.0px;height:10.0px;background:#dfe3e9"></div>
<span class="t lk" style="left:1575.2px;top:275.1px;transform:scaleX(0.855);width:22.30px;text-align-last:justify;">编辑</span>
<div class="b " style="left:1603.5px;top:280.3px;width:1.0px;height:10.0px;background:#dfe3e9"></div>
<span class="t lk" style="left:1614.7px;top:275.1px;transform:scaleX(0.859);width:22.30px;text-align-last:justify;">删除</span>
<div class="b hl" style="left:439.5px;top:347.3px;width:1223.1px;height:1.0px;"></div>
<div class="b cb" style="left:450px;top:320.2px;width:11.4px;height:12.9px;"></div>
<span class="t td" style="left:486.5px;top:316.5px;">220.181.41.2</span>
<span class="t td" style="left:610.5px;top:316.5px;">220.181.41.2</span>
<svg style="left:731.2px;top:317.7px" width="12" height="13.500" viewBox="0 0 12 13.500" fill="none" stroke="#93b1da" stroke-width="1.300"><path d="M1 10.400V6.200a5 5 0 0 1 10 0v4.200M3.400 9V6.400a2.600 2.600 0 0 1 5.200 0V9"/><path d="M6 6v7.400" stroke="#3f66a3" stroke-width="1.600"/><circle cx="6" cy="6.200" r="1.200" fill="#3a5f9c" stroke="none"/></svg>
<span class="t td" style="left:812.8px;top:316.5px;">1</span>
<span class="t td" style="left:963.4px;top:316.5px;width:51.66px;text-align-last:justify;">192后网段</span>
<span class="t td" style="left:1044.2px;top:316.5px;transform:scaleX(0.859);width:44.30px;text-align-last:justify;">本地设备</span>
<span class="t lk" style="left:1535.6px;top:316.8px;transform:scaleX(0.845);width:22.30px;text-align-last:justify;">查看</span>
<div class="b " style="left:1564px;top:322.0px;width:1.0px;height:10.0px;background:#dfe3e9"></div>
<span class="t lk" style="left:1575.2px;top:316.8px;transform:scaleX(0.855);width:22.30px;text-align-last:justify;">编辑</span>
<div class="b " style="left:1603.5px;top:322.0px;width:1.0px;height:10.0px;background:#dfe3e9"></div>
<span class="t lk" style="left:1614.7px;top:316.8px;transform:scaleX(0.859);width:22.30px;text-align-last:justify;">删除</span>
<div class="b hl" style="left:439.5px;top:389.0px;width:1223.1px;height:1.0px;"></div>
<div class="b cb" style="left:450px;top:361.9px;width:11.4px;height:12.9px;"></div>
<span class="t td" style="left:486.5px;top:358.2px;">1.183.73.15</span>
<span class="t td" style="left:610.5px;top:358.2px;">1.183.73.15</span>
<svg style="left:731.2px;top:359.4px" width="12" height="13.500" viewBox="0 0 12 13.500" fill="none" stroke="#93b1da" stroke-width="1.300"><path d="M1 10.400V6.200a5 5 0 0 1 10 0v4.200M3.400 9V6.400a2.600 2.600 0 0 1 5.200 0V9"/><path d="M6 6v7.400" stroke="#3f66a3" stroke-width="1.600"/><circle cx="6" cy="6.200" r="1.200" fill="#3a5f9c" stroke="none"/></svg>
<span class="t td" style="left:812.8px;top:358.2px;">1</span>
<span class="t td" style="left:963.4px;top:358.2px;width:56.55px;text-align-last:justify;">10以前网段</span>
<span class="t td" style="left:1044.2px;top:358.2px;transform:scaleX(0.859);width:44.30px;text-align-last:justify;">本地设备</span>
<span class="t lk" style="left:1535.6px;top:358.5px;transform:scaleX(0.845);width:22.30px;text-align-last:justify;">查看</span>
<div class="b " style="left:1564px;top:363.7px;width:1.0px;height:10.0px;background:#dfe3e9"></div>
<span class="t lk" style="left:1575.2px;top:358.5px;transform:scaleX(0.855);width:22.30px;text-align-last:justify;">编辑</span>
<div class="b " style="left:1603.5px;top:363.7px;width:1.0px;height:10.0px;background:#dfe3e9"></div>
<span class="t lk" style="left:1614.7px;top:358.5px;transform:scaleX(0.859);width:22.30px;text-align-last:justify;">删除</span>
<div class="b hl" style="left:439.5px;top:430.7px;width:1223.1px;height:1.0px;"></div>
<div class="b cb" style="left:450px;top:403.6px;width:11.4px;height:12.9px;"></div>
<span class="t td" style="left:486.5px;top:399.9px;">10.95.54.207</span>
<span class="t td" style="left:610.5px;top:399.9px;">10.95.54.207</span>
<svg style="left:731.2px;top:401.1px" width="12" height="13.500" viewBox="0 0 12 13.500" fill="none" stroke="#93b1da" stroke-width="1.300"><path d="M1 10.400V6.200a5 5 0 0 1 10 0v4.200M3.400 9V6.400a2.600 2.600 0 0 1 5.200 0V9"/><path d="M6 6v7.400" stroke="#3f66a3" stroke-width="1.600"/><circle cx="6" cy="6.200" r="1.200" fill="#3a5f9c" stroke="none"/></svg>
<span class="t td" style="left:812.8px;top:399.9px;">1</span>
<span class="t td" style="left:963.4px;top:399.9px;width:66.30px;text-align-last:justify;">未分配资产组</span>
<span class="t td" style="left:1044.2px;top:399.9px;transform:scaleX(0.859);width:44.30px;text-align-last:justify;">本地设备</span>
<span class="t lk" style="left:1535.6px;top:400.2px;transform:scaleX(0.845);width:22.30px;text-align-last:justify;">查看</span>
<div class="b " style="left:1564px;top:405.4px;width:1.0px;height:10.0px;background:#dfe3e9"></div>
<span class="t lk" style="left:1575.2px;top:400.2px;transform:scaleX(0.855);width:22.30px;text-align-last:justify;">编辑</span>
<div class="b " style="left:1603.5px;top:405.4px;width:1.0px;height:10.0px;background:#dfe3e9"></div>
<span class="t lk" style="left:1614.7px;top:400.2px;transform:scaleX(0.859);width:22.30px;text-align-last:justify;">删除</span>
<div class="b hl" style="left:439.5px;top:472.4px;width:1223.1px;height:1.0px;"></div>
<div class="b cb" style="left:450px;top:445.3px;width:11.4px;height:12.9px;"></div>
<span class="t td" style="left:486.5px;top:441.6px;">10.95.28.19</span>
<span class="t td" style="left:610.5px;top:441.6px;">10.95.28.19</span>
<svg style="left:731.2px;top:442.8px" width="12" height="13.500" viewBox="0 0 12 13.500" fill="none" stroke="#93b1da" stroke-width="1.300"><path d="M1 10.400V6.200a5 5 0 0 1 10 0v4.200M3.400 9V6.400a2.600 2.600 0 0 1 5.200 0V9"/><path d="M6 6v7.400" stroke="#3f66a3" stroke-width="1.600"/><circle cx="6" cy="6.200" r="1.200" fill="#3a5f9c" stroke="none"/></svg>
<span class="t td" style="left:812.8px;top:441.6px;">1</span>
<span class="t td" style="left:963.4px;top:441.6px;">www</span>
<span class="t td" style="left:1044.2px;top:441.6px;transform:scaleX(0.859);width:44.30px;text-align-last:justify;">手动添加</span>
<span class="t lk" style="left:1535.6px;top:441.9px;transform:scaleX(0.845);width:22.30px;text-align-last:justify;">查看</span>
<div class="b " style="left:1564px;top:447.1px;width:1.0px;height:10.0px;background:#dfe3e9"></div>
<span class="t lk" style="left:1575.2px;top:441.9px;transform:scaleX(0.855);width:22.30px;text-align-last:justify;">编辑</span>
<div class="b " style="left:1603.5px;top:447.1px;width:1.0px;height:10.0px;background:#dfe3e9"></div>
<span class="t lk" style="left:1614.7px;top:441.9px;transform:scaleX(0.859);width:22.30px;text-align-last:justify;">删除</span>
<div class="b hl" style="left:439.5px;top:514.1px;width:1223.1px;height:1.0px;"></div>
<div class="b cb" style="left:450px;top:487.0px;width:11.4px;height:12.9px;"></div>
<span class="t td" style="left:486.5px;top:483.3px;">10.252.16.57</span>
<span class="t td" style="left:610.5px;top:483.3px;">10.252.16.57</span>
<svg style="left:731.2px;top:484.5px" width="12" height="13.500" viewBox="0 0 12 13.500" fill="none" stroke="#93b1da" stroke-width="1.300"><path d="M1 10.400V6.200a5 5 0 0 1 10 0v4.200M3.400 9V6.400a2.600 2.600 0 0 1 5.200 0V9"/><path d="M6 6v7.400" stroke="#3f66a3" stroke-width="1.600"/><circle cx="6" cy="6.200" r="1.200" fill="#3a5f9c" stroke="none"/></svg>
<span class="t td" style="left:812.8px;top:483.3px;">1</span>
<span class="t td" style="left:963.4px;top:483.3px;width:66.30px;text-align-last:justify;">未分配资产组</span>
<span class="t td" style="left:1044.2px;top:483.3px;transform:scaleX(0.859);width:44.30px;text-align-last:justify;">本地设备</span>
<span class="t lk" style="left:1535.6px;top:483.6px;transform:scaleX(0.845);width:22.30px;text-align-last:justify;">查看</span>
<div class="b " style="left:1564px;top:488.8px;width:1.0px;height:10.0px;background:#dfe3e9"></div>
<span class="t lk" style="left:1575.2px;top:483.6px;transform:scaleX(0.855);width:22.30px;text-align-last:justify;">编辑</span>
<div class="b " style="left:1603.5px;top:488.8px;width:1.0px;height:10.0px;background:#dfe3e9"></div>
<span class="t lk" style="left:1614.7px;top:483.6px;transform:scaleX(0.859);width:22.30px;text-align-last:justify;">删除</span>
<div class="b hl" style="left:439.5px;top:555.9px;width:1223.1px;height:1.0px;"></div>
<div class="b cb" style="left:450px;top:528.7px;width:11.4px;height:12.9px;"></div>
<span class="t td" style="left:486.5px;top:525.0px;">10.95.14.233</span>
<span class="t td" style="left:610.5px;top:525.0px;">10.95.14.233</span>
<svg style="left:731.2px;top:526.2px" width="12" height="13.500" viewBox="0 0 12 13.500" fill="none" stroke="#93b1da" stroke-width="1.300"><path d="M1 10.400V6.200a5 5 0 0 1 10 0v4.200M3.400 9V6.400a2.600 2.600 0 0 1 5.200 0V9"/><path d="M6 6v7.400" stroke="#3f66a3" stroke-width="1.600"/><circle cx="6" cy="6.200" r="1.200" fill="#3a5f9c" stroke="none"/></svg>
<span class="t td" style="left:812.8px;top:525.0px;">1</span>
<span class="t td" style="left:963.4px;top:525.0px;width:66.30px;text-align-last:justify;">未分配资产组</span>
<span class="t td" style="left:1044.2px;top:525.0px;transform:scaleX(0.859);width:44.30px;text-align-last:justify;">本地设备</span>
<span class="t lk" style="left:1535.6px;top:525.3px;transform:scaleX(0.845);width:22.30px;text-align-last:justify;">查看</span>
<div class="b " style="left:1564px;top:530.5px;width:1.0px;height:10.0px;background:#dfe3e9"></div>
<span class="t lk" style="left:1575.2px;top:525.3px;transform:scaleX(0.855);width:22.30px;text-align-last:justify;">编辑</span>
<div class="b " style="left:1603.5px;top:530.5px;width:1.0px;height:10.0px;background:#dfe3e9"></div>
<span class="t lk" style="left:1614.7px;top:525.3px;transform:scaleX(0.859);width:22.30px;text-align-last:justify;">删除</span>
<div class="b hl" style="left:439.5px;top:597.6px;width:1223.1px;height:1.0px;"></div>
<div class="b cb" style="left:450px;top:570.4px;width:11.4px;height:12.9px;"></div>
<span class="t td" style="left:486.5px;top:566.7px;">10.251.75.213</span>
<span class="t td" style="left:610.5px;top:566.7px;">10.251.75.213</span>
<svg style="left:731.2px;top:567.9px" width="12" height="13.500" viewBox="0 0 12 13.500" fill="none" stroke="#93b1da" stroke-width="1.300"><path d="M1 10.400V6.200a5 5 0 0 1 10 0v4.200M3.400 9V6.400a2.600 2.600 0 0 1 5.200 0V9"/><path d="M6 6v7.400" stroke="#3f66a3" stroke-width="1.600"/><circle cx="6" cy="6.200" r="1.200" fill="#3a5f9c" stroke="none"/></svg>
<span class="t td" style="left:812.8px;top:566.7px;">1</span>
<span class="t td" style="left:963.4px;top:566.7px;width:66.30px;text-align-last:justify;">未分配资产组</span>
<span class="t td" style="left:1044.2px;top:566.7px;transform:scaleX(0.859);width:44.30px;text-align-last:justify;">本地设备</span>
<span class="t lk" style="left:1535.6px;top:567.0px;transform:scaleX(0.845);width:22.30px;text-align-last:justify;">查看</span>
<div class="b " style="left:1564px;top:572.2px;width:1.0px;height:10.0px;background:#dfe3e9"></div>
<span class="t lk" style="left:1575.2px;top:567.0px;transform:scaleX(0.855);width:22.30px;text-align-last:justify;">编辑</span>
<div class="b " style="left:1603.5px;top:572.2px;width:1.0px;height:10.0px;background:#dfe3e9"></div>
<span class="t lk" style="left:1614.7px;top:567.0px;transform:scaleX(0.859);width:22.30px;text-align-last:justify;">删除</span>
<div class="b hl" style="left:439.5px;top:639.3px;width:1223.1px;height:1.0px;"></div>
<div class="b cb" style="left:450px;top:612.1px;width:11.4px;height:12.9px;"></div>
<span class="t td" style="left:486.5px;top:608.4px;">10.43.100.21</span>
<span class="t td" style="left:610.5px;top:608.4px;">10.43.100.21</span>
<svg style="left:731.2px;top:609.6px" width="12" height="13.500" viewBox="0 0 12 13.500" fill="none" stroke="#93b1da" stroke-width="1.300"><path d="M1 10.400V6.200a5 5 0 0 1 10 0v4.200M3.400 9V6.400a2.600 2.600 0 0 1 5.200 0V9"/><path d="M6 6v7.400" stroke="#3f66a3" stroke-width="1.600"/><circle cx="6" cy="6.200" r="1.200" fill="#3a5f9c" stroke="none"/></svg>
<span class="t td" style="left:812.8px;top:608.4px;">1</span>
<span class="t td" style="left:963.4px;top:608.4px;width:66.30px;text-align-last:justify;">未分配资产组</span>
<span class="t td" style="left:1044.2px;top:608.4px;transform:scaleX(0.859);width:44.30px;text-align-last:justify;">本地设备</span>
<span class="t lk" style="left:1535.6px;top:608.7px;transform:scaleX(0.845);width:22.30px;text-align-last:justify;">查看</span>
<div class="b " style="left:1564px;top:613.9px;width:1.0px;height:10.0px;background:#dfe3e9"></div>
<span class="t lk" style="left:1575.2px;top:608.7px;transform:scaleX(0.855);width:22.30px;text-align-last:justify;">编辑</span>
<div class="b " style="left:1603.5px;top:613.9px;width:1.0px;height:10.0px;background:#dfe3e9"></div>
<span class="t lk" style="left:1614.7px;top:608.7px;transform:scaleX(0.859);width:22.30px;text-align-last:justify;">删除</span>
<span class="t pgt" style="left:1144.7px;top:665.3px;transform:scaleX(0.912);width:71.24px;text-align-last:justify;">共 7490058 条</span>
<div class="b pb" style="left:1220.4px;top:660.8px;width:78.6px;height:28.9px;"></div>
<span class="t pg" style="left:1236.6px;top:665.3px;font-size:12pxtransform:scaleX(0.845);width:40.99px;text-align-last:justify;">10条/页</span>
<svg style="left:1286.600px;top:673.300px" width="7.400" height="4.600" viewBox="0 0 7.400 4.600" fill="none" stroke="#b0b6c0" stroke-width="1"><path d="M.5.500 3.700 3.900 6.900.5"/></svg>
<div class="b pb" style="left:1315.1px;top:660.8px;width:25.1px;height:28.9px;"></div>
<svg style="left:1325px;top:670.500px" width="5" height="9" viewBox="0 0 5 9" fill="none" stroke="#b0b6c0" stroke-width="1.200"><path d="M4.300.700.8 4.500 4.300 8.300"/></svg>
<div class="b " style="left:1348.8px;top:660.8px;width:24.9px;height:28.9px;background:#055ab0;border-radius:2px"></div>
<span class="t pg" style="left:1359.2px;top:666.2px;color:#fff;font-weight:bold;font-size:12px">1</span>
<div class="b pb" style="left:1381.5px;top:660.8px;width:24.9px;height:28.9px;"></div>
<span class="t pg" style="left:1391.3500000000001px;top:666.2px;font-size:12px">2</span>
<div class="b pb" style="left:1414.5px;top:660.8px;width:25.1px;height:28.9px;"></div>
<span class="t pg" style="left:1424.45px;top:666.2px;font-size:12px">3</span>
<div class="b pb" style="left:1447.6px;top:660.8px;width:25.1px;height:28.9px;"></div>
<span class="t pg" style="left:1457.5500000000002px;top:666.2px;font-size:12px">4</span>
<div class="b pb" style="left:1480.9px;top:660.8px;width:25.1px;height:28.9px;"></div>
<span class="t pg" style="left:1490.8500000000001px;top:666.2px;font-size:12px">5</span>
<div class="b pb" style="left:1514px;top:660.8px;width:25.4px;height:28.9px;"></div>
<span class="t pg" style="left:1524.1000000000001px;top:666.2px;font-size:12px">6</span>
<div class="b pb" style="left:1547.3px;top:660.8px;width:24.9px;height:28.9px;"></div>
<div class="b " style="left:1555.2px;top:675.3px;width:1.8px;height:1.8px;background:#4a4f58;border-radius:50%"></div>
<div class="b " style="left:1558.8px;top:675.3px;width:1.8px;height:1.8px;background:#4a4f58;border-radius:50%"></div>
<div class="b " style="left:1562.4px;top:675.3px;width:1.8px;height:1.8px;background:#4a4f58;border-radius:50%"></div>
<div class="b pb" style="left:1580px;top:660.8px;width:42.0px;height:28.9px;"></div>
<span class="t pg" style="left:1584.6px;top:666.2px;font-size:12px">749006</span>
<div class="b pb" style="left:1629.9px;top:660.8px;width:24.9px;height:28.9px;"></div>
<svg style="left:1640px;top:670.500px" width="5" height="9" viewBox="0 0 5 9" fill="none" stroke="#6f7785" stroke-width="1.200"><path d="M.7.700 4.200 4.500.7 8.300"/></svg>
<div class="b " style="left:1667.4px;top:374.5px;width:74.6px;height:74.5px;background:#045ab0;border-radius:50%;box-shadow:0 0 0 2px rgba(255,255,255,.7)"></div>
</body></html>
